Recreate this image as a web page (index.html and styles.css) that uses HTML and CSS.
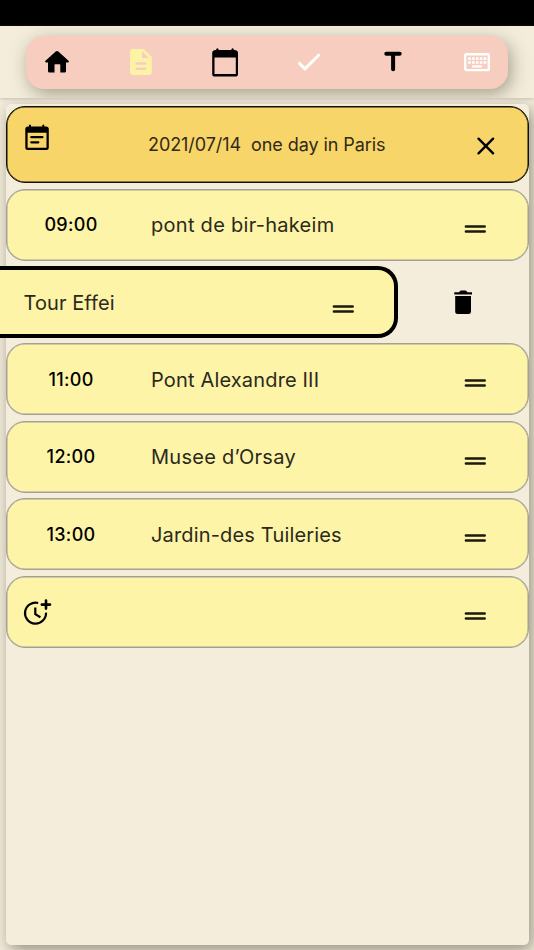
FILE: index.html
```html
<!DOCTYPE html>
<html lang="en">
<head>
<meta charset="utf-8">
<title>Day plan</title>
<link rel="stylesheet" href="styles.css">
</head>
<body>
<svg class="defs" width="0" height="0">
  <symbol id="handle" viewBox="0 0 22 10"><path d="M1.9 2.4H20.7M1.9 7.5H20.7" fill="none" stroke="#1b1910" stroke-width="2.5" stroke-linecap="round"/></symbol>
</svg>
<div class="status"></div>
<header class="header">
  <nav class="toolbar">
    <svg viewBox="0 0 28 28"><path d="M12.7 3.5Q14 2.4 15.3 3.5L25.8 13Q26.3 14.3 25 14.4H23V23Q23 24.5 21.6 24.5H17.3V17Q17.3 16.3 16.5 16.3H12.3Q11.5 16.3 11.5 17V24.5H6.5Q5 24.5 5 23V14.4H3Q1.8 14.2 2.2 13Z"/></svg>
    <svg class="yellow" viewBox="0 0 28 28"><path fill-rule="evenodd" d="M5.5 1H16.3L24.8 9V24.3Q24.8 27 22.2 27H5.6Q3 27 3 24.3V3.6Q3 1 5.5 1ZM15 3.3V8.5Q15 10 16.5 10H21.8ZM9.6 14.2a1.2 1.2 0 0 0 0 2.5h8.6a1.2 1.2 0 0 0 0-2.5ZM9.6 19.4a1.2 1.2 0 0 0 0 2.5h8.6a1.2 1.2 0 0 0 0-2.5Z"/></svg>
    <svg viewBox="0 0 28 28"><path fill-rule="evenodd" d="M5.2 2V1.2q1.2-1.8 2.4 0V2H20.4V1.2q1.2-1.8 2.4 0V2H24Q27 2.5 27 5V26Q27 28.6 24.3 28.6H3.7Q1.2 28.6 1.2 26V5Q1.2 2.5 4 2ZM3.5 9.4V26.1H24.8V9.4Z"/></svg>
    <svg viewBox="0 0 28 28"><path d="M4.5 15.4L10 20.8L23.8 7" fill="none" stroke="#fff" stroke-width="3" stroke-linecap="round" stroke-linejoin="miter"/></svg>
    <svg viewBox="0 0 28 28"><path d="M7.3 5.8H20.7M14.1 6V21.2" fill="none" stroke="#000" stroke-width="4" stroke-linecap="round"/></svg>
    <svg viewBox="0 0 28 28"><rect x="2.2" y="6.2" width="23.6" height="15.9" rx="1.4" fill="none" stroke="#fff" stroke-width="2.4"/><path d="M5.2 10.6H23.3M5.2 14.5H23.3" fill="none" stroke="#fff" stroke-width="2.7" stroke-dasharray="2.6 1.27"/><path d="M9 18.4H19" stroke="#fff" stroke-width="2.2"/></svg>
  </nav>
</header>
<main class="panel">
  <section class="card heading">
    <svg class="event" viewBox="0 0 24 27"><path fill-rule="evenodd" d="M4 2.5V1.3q1-1.6 2 0V2.5H17.3V1.3q1-1.6 2 0V2.5H21Q23.8 2.6 23.8 5V23.5Q23.8 26 21.2 26H2.8Q.3 26 .3 23.5V5Q.3 2.6 3 2.5ZM2.6 8.7V23.7H21.5V8.7Z"/><path d="M6.3 13.2H17.4M6.3 18.3H13.3" fill="none" stroke="#000" stroke-width="2.3" stroke-linecap="round"/></svg>
    <h1 class="title">2021/07/14&nbsp; one day in Paris</h1>
    <svg class="close" viewBox="0 0 18 18"><path d="M1.5 1.7L16.1 16.3M16.1 1.7L1.5 16.3" stroke="#000" stroke-width="2.4" stroke-linecap="round"/></svg>
  </section>
  <article class="card"><time class="time">09:00</time><span class="name">pont de bir-hakeim</span><svg class="handle"><use href="#handle"/></svg></article>
  <div class="swiped">
    <article class="card active"><span class="name">Tour Effei</span><svg class="handle"><use href="#handle"/></svg></article>
    <svg class="trash" viewBox="0 0 18 25"><path d="M.3 2.3H5L6 1Q6.4.5 7 .5H11.5Q12 .5 12.5 1L13.4 2.3H18V4.4H.3ZM1.2 6H17V21.5Q17 24 14.6 24H3.7Q1.2 24 1.2 21.5Z"/></svg>
  </div>
  <article class="card"><time class="time">11:00</time><span class="name tight">Pont Alexandre III</span><svg class="handle"><use href="#handle"/></svg></article>
  <article class="card"><time class="time">12:00</time><span class="name">Musee d’Orsay</span><svg class="handle"><use href="#handle"/></svg></article>
  <article class="card"><time class="time">13:00</time><span class="name tight">Jardin-des Tuileries</span><svg class="handle"><use href="#handle"/></svg></article>
  <article class="card empty">
    <svg class="add-time" viewBox="0 0 28 27"><path d="M14.2 4A10.5 10.5 0 1 0 22 13.6M11.3 8.4V15.2L16.4 18.2" fill="none" stroke="#000" stroke-width="2.2"/><path d="M22 1.6V9.6M17.8 5.6H26" stroke="#000" stroke-width="2.6" stroke-linecap="round"/></svg>
    <svg class="handle"><use href="#handle"/></svg>
  </article>
</main>
</body>
</html>
```
FILE: styles.css
```css
* { box-sizing: border-box; }

body {
  margin: 0;
  height: 950px;
  overflow: hidden;
  display: flex;
  flex-direction: column;
  background: #f5eddc;
  font-family: Inter, sans-serif;
}

svg { display: block; flex: none; overflow: visible; }
.defs { position: absolute; }

.status { height: 26px; flex: none; background: #000; }

.header {
  height: 72px;
  flex: none;
  padding: 9.5px 26px 9px;
  overflow: hidden;
  background: #f5eddc;
  box-shadow: 0 1px 3px #9d968780;
  z-index: 1;
}

.toolbar {
  height: 53.5px;
  display: flex;
  align-items: center;
  gap: 56px;
  padding: 0 17px;
  border-radius: 18px;
  background: #f6cdbe;
  box-shadow: 3px 5px 18px #777860a8;
}
.toolbar svg { width: 28px; height: 28px; }
.toolbar .yellow { fill: #fdf3a6; }

.panel {
  height: 840.5px;
  flex: none;
  margin: 6px 5.5px 0;
  padding-top: 2.3px;
  display: flex;
  flex-direction: column;
  gap: 5.4px;
  border-radius: 5px;
  background: #f5eddc;
  box-shadow: 3px 5px 16px #7c7a6cd0;
}

.card {
  height: 72px;
  flex: none;
  display: flex;
  align-items: center;
  padding-right: 41.5px;
  border: 1px solid #a3a197;
  border-radius: 19px;
  background: #fdf4a7;
  box-shadow: inset 0 0 0 .5px #a3a197;
}

.heading {
  height: 77px;
  border-color: #15110a;
  background: #f8d568;
  box-shadow: inset 0 0 0 .5px #15110a;
  padding: 0 32.5px 0 18.5px;
}
.event { width: 24px; height: 27px; margin-bottom: 14px; }
.title {
  margin: 1px 0 0 99px;
  font-size: 18px;
  font-weight: 400;
  line-height: 24px;
  letter-spacing: -.07px;
  color: #302a19;
  white-space: nowrap;
}
.close { width: 18px; height: 18px; margin: 3px 0 0 auto; }

.time {
  width: 129px;
  text-align: center;
  font-size: 18px;
  font-weight: 500;
  letter-spacing: .3px;
}
.name {
  margin: 1px 0 0 15.5px;
  font-size: 20px;
  letter-spacing: .28px;
  color: #2b291c;
  white-space: nowrap;
}
.name.tight { letter-spacing: .16px; }
.handle { width: 22px; height: 10px; margin: 8px 0 0 auto; }

.swiped {
  height: 72px;
  flex: none;
  display: flex;
  align-items: center;
  margin-left: -5.5px;
}
.active {
  width: 398px;
  border: 4px solid #000;
  border-left: 0;
  border-radius: 0 20px 20px 0;
  padding: 0 40.5px 0 23.5px;
  box-shadow: none;
}
.active .name { margin-left: 0; letter-spacing: .08px; }
.active .handle { margin-top: 13px; }
.trash { width: 18px; height: 25px; margin-left: 56px; }

.empty { padding-left: 18px; }
.add-time { width: 28px; height: 27px; margin: 1px 0 0 -.5px; }
```
